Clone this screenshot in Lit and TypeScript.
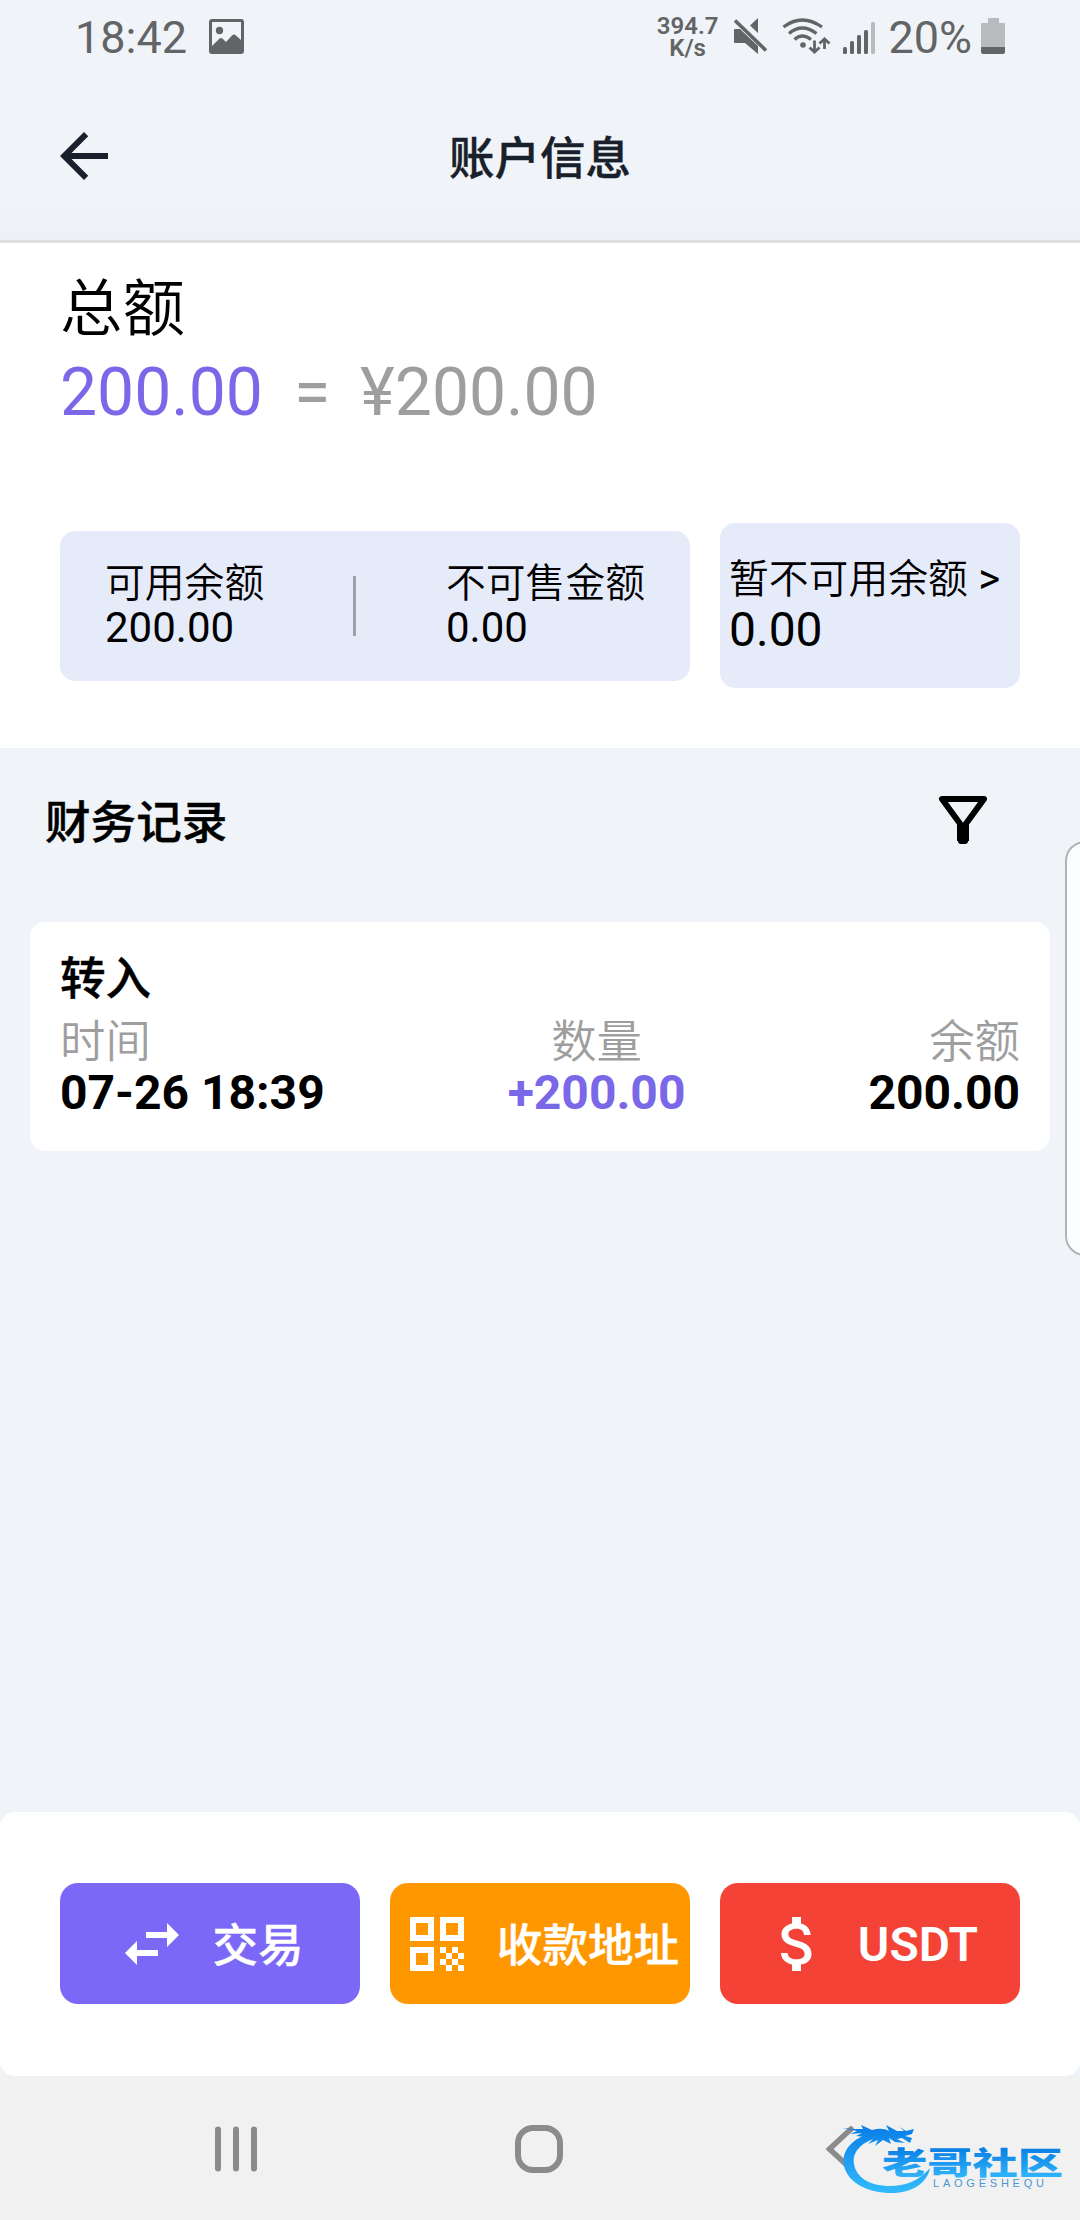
import { LitElement, html, css, svg } from "lit";
import { customElement, property } from "lit/decorators.js";

const fontStack = css`Roboto, "Noto Sans CJK SC", sans-serif`;

@customElement("status-bar")
class StatusBar extends LitElement {
  static styles = css`
    :host { display: block; height: 72px; color: #636466; font-family: ${fontStack}; }
    .bar { display: flex; height: 72px; align-items: flex-start; padding: 0 75px 0 75px; }
    .big { font-size: 45px; line-height: 54px; margin-top: 11px; }
    .pic { width: 35px; height: 35px; margin: 19px 0 0 22px; }
    .grow { flex: 1; }
    .rate { font-size: 24px; line-height: 22px; font-weight: 600; text-align: center; margin-top: 15px; }
    svg { display: block; fill: currentColor; }
    .mute { width: 35px; height: 36px; margin: 18px 0 0 15px; }
    .wifi { width: 49px; height: 36px; margin: 18px 0 0 14px; }
    .signal { width: 32px; height: 32px; margin: 22px 0 0 12px; }
    .pct { margin-left: 13px; }
    .battery { width: 24px; height: 36px; margin: 18px 0 0 9px; }
  `;
  render() {
    return html`<div class="bar">
      <div class="big">18:42</div>
      <svg class="pic" viewBox="0 0 35 35"><path fill-rule="evenodd" d="M3 0H32Q35 0 35 3V32Q35 35 32 35H3Q0 35 0 32V3Q0 0 3 0ZM3 3V27L10 20Q12 18 14 20L17 23L23 16.500Q25 14.500 27 16.500L32 21V3ZM10.500 7.800a3.700 3.700 0 1 1 0 7.400a3.700 3.700 0 1 1 0-7.400Z"/></svg>
      <div class="grow"></div>
      <div class="rate">394.7<br />K/s</div>
      <svg class="mute" viewBox="0 0 35 36"><path d="M2 11H7L25 28V36L12 25H2Q1 25 1 24V12Q1 11 2 11ZM25 0V15L17 7.500Z"/><path d="M2 2.500L33 32.500" stroke="currentColor" stroke-width="3.600" fill="none"/></svg>
      <svg class="wifi" viewBox="0 0 49 36">
        <g fill="none" stroke="currentColor" stroke-width="3.200"><path d="M1.500 9Q20-5 40 9"/><path d="M7 15.500Q20 4.500 34.500 15.500"/><path d="M12.500 21.500Q20 14.500 29 21.500"/>
        <path d="M32.500 22.500V34M27.500 29.500L32.500 34L37.500 29.500M42.500 31V21M37.500 25.500L42.500 21L47.500 25.500" stroke-width="2.800"/></g>
        <circle cx="21" cy="27" r="2.800"/>
      </svg>
      <svg class="signal" viewBox="0 0 32 32"><rect x="0" y="25" width="4" height="7" rx="1.500"/><rect x="7" y="19" width="4" height="13" rx="1.500"/><rect x="14" y="13" width="4" height="19" rx="1.500"/><rect x="21" y="8" width="4" height="24" rx="1.500"/><rect x="28" y="0" width="4" height="32" rx="1.500" fill="#b9babd"/></svg>
      <div class="big pct">20%</div>
      <svg class="battery" viewBox="0 0 24 36"><path d="M7 0H18V5H23Q24 5 24 6V29H0V6Q0 5 1 5H7Z" fill="#b9babd"/><path d="M0 29H24V34Q24 36 22 36H2Q0 36 0 34Z"/></svg>
    </div>`;
  }
}

@customElement("page-header")
class PageHeader extends LitElement {
  @property() heading = "";
  static styles = css`
    :host { display: block; font-family: ${fontStack}; color: #18202b; }
    .header { box-sizing: border-box; height: 171px; border-bottom: 3px solid #dfdfe0; display: grid; grid-template-columns: 72px 1fr 72px; align-items: center; padding: 0 48px; background: linear-gradient(#f0f4f9 80%, #edf0f6); }
    svg { width: 72px; height: 72px; fill: currentColor; display: block; }
    .title { text-align: center; font-size: 45.500px; line-height: 60px; padding-top: 7px; font-weight: 500; -webkit-text-stroke: 0.400px currentColor; }
  `;
  render() {
    return html`<div class="header">
      <svg viewBox="0 0 24 24"><path d="M20 11H7.830l5.590-5.590L12 4l-8 8 8 8 1.410-1.410L7.830 13H20v-2z"/></svg>
      <div class="title">${this.heading}</div>
    </div>`;
  }
}

@customElement("balance-summary")
class BalanceSummary extends LitElement {
  static styles = css`
    :host { display: block; font-family: ${fontStack}; color: #000; background: #fff; }
    .summary { padding: 30px 60px 60px; }
    .label { font-size: 62.500px; line-height: 74px; font-weight: 350; }
    .amount { display: flex; font-size: 66px; line-height: 78px; margin-top: 7px; color: #9e9e9e; }
    .coin { color: #7b68e8; }
    .eq { margin: 0 30px 0 31px; }
    .boxes { display: flex; align-items: center; gap: 30px; margin-top: 91px; }
    .box { box-sizing: border-box; background: #e6ebfa; border-radius: 15px; }
    .wide { width: 630px; height: 150px; padding-left: 45px; display: flex; align-items: center; }
    .first { width: 248px; }
    .rule { width: 3px; height: 60px; background: #9da0a8; margin-right: 90px; }
    .name { font-size: 39.800px; line-height: 44px; font-weight: 350; }
    .num { font-size: 42px; line-height: 44px; }
    .narrow { width: 300px; height: 165px; padding: 33px 0 0 9px; }
    .narrow .name { line-height: 46px; white-space: pre; }
    .narrow .num { font-size: 48px; line-height: 54px; }
    .chev { font-size: 42px; font-weight: 400; }
  `;
  render() {
    return html`<section class="summary">
      <div class="label">总额</div>
      <div class="amount"><span class="coin">200.00</span><span class="eq">=</span><span>¥200.00</span></div>
      <div class="boxes">
        <div class="box wide">
          <div class="first"><div class="name">可用余额</div><div class="num">200.00</div></div>
          <div class="rule"></div>
          <div><div class="name">不可售金额</div><div class="num">0.00</div></div>
        </div>
        <div class="box narrow"><div class="name">暂不可用余额<span class="chev"> &gt;</span></div><div class="num">0.00</div></div>
      </div>
    </section>`;
  }
}

@customElement("record-list")
class RecordList extends LitElement {
  static styles = css`
    :host { display: block; font-family: ${fontStack}; color: #000; }
    .head { box-sizing: border-box; height: 174px; padding: 36px 81px 0 45px; display: flex; justify-content: space-between; align-items: flex-start; }
    .title { font-size: 45.600px; line-height: 72px; font-weight: 500; margin-top: 4px; -webkit-text-stroke: 0.400px currentColor; }
    svg { width: 72px; height: 72px; display: block; }
    .card { box-sizing: border-box; margin: 0 30px; height: 229px; padding: 31px 30px 0; background: #fff; border-radius: 15px; }
    .kind { font-size: 45.600px; line-height: 54px; font-weight: 500; -webkit-text-stroke: 0.400px currentColor; }
    .cols { display: flex; justify-content: space-between; margin-top: 14px; }
    .col:nth-child(2) { text-align: center; }
    .col:nth-child(3) { text-align: right; }
    .key { font-size: 45.400px; line-height: 44px; color: #9e9e9e; font-weight: 350; }
    .val { font-size: 48px; line-height: 56px; font-weight: 700; }
    .plus { color: #7b68e8; }
  `;
  render() {
    return html`
      <div class="head">
        <div class="title">财务记录</div>
        <svg viewBox="0 0 72 72"><path d="M15 15H57L38 41V57H34V41Z" fill="none" stroke="#000" stroke-width="6" stroke-linejoin="round"/><path d="M30 40H42V57H30Z"/></svg>
      </div>
      <article class="card">
        <div class="kind">转入</div>
        <div class="cols">
          <div class="col"><div class="key">时间</div><div class="val">07-26 18:39</div></div>
          <div class="col"><div class="key">数量</div><div class="val plus">+200.00</div></div>
          <div class="col"><div class="key">余额</div><div class="val">200.00</div></div>
        </div>
      </article>`;
  }
}

const actions = [
  { tone: "violet", label: "交易", icon: svg`<path d="M6.990 11L3 15l3.990 4v-3H14v-2H6.990v-3zM21 9l-3.990-4v3H10v2h7.010v3L21 9z"/>` },
  { tone: "orange", label: "收款地址", icon: svg`<path fill-rule="evenodd" d="M3 3h8v8H3zM5 5v4h4V5zM13 3h8v8h-8zM15 5v4h4V5zM3 13h8v8H3zM5 15v4h4v-4z"/><path d="M13 13h2v2h-2zM17 13h2v2h-2zM15 15h2v2h-2zM19 15h2v2h-2zM13 17h2v2h-2zM17 17h2v2h-2zM15 19h2v2h-2zM19 19h2v2h-2z"/>` },
  { tone: "red", label: "USDT", icon: svg`<path d="M11.800 10.900c-2.270-.590-3-1.200-3-2.150 0-1.090 1.010-1.850 2.700-1.850 1.780 0 2.440.850 2.500 2.100h2.210c-.070-1.720-1.120-3.300-3.210-3.810V3h-3v2.160c-1.940.420-3.500 1.680-3.500 3.610 0 2.310 1.910 3.460 4.700 4.130 2.500.600 3 1.480 3 2.410 0 .690-.490 1.790-2.700 1.790-2.060 0-2.870-.920-2.980-2.100h-2.200c.120 2.190 1.760 3.420 3.680 3.830V21h3v-2.150c1.950-.370 3.500-1.500 3.500-3.550 0-2.840-2.430-3.810-4.700-4.400z"/>` },
];

@customElement("action-panel")
class ActionPanel extends LitElement {
  static styles = css`
    :host { display: block; font-family: ${fontStack}; }
    .panel { box-sizing: border-box; height: 264px; padding: 71px 60px 0; background: #fff; border-radius: 15px; display: grid; grid-template-columns: repeat(3, 300px); gap: 30px; }
    .btn { height: 121px; border-radius: 18px; color: #fff; display: flex; align-items: center; justify-content: center; gap: 24px; white-space: nowrap; }
    .violet { background: #7b68f6; }
    .orange { background: #ff9800; }
    .red { background: #f44336; }
    svg { width: 72px; height: 72px; fill: currentColor; flex: none; }
    .text { font-size: 45.600px; line-height: 60px; padding-top: 7px; font-weight: 500; -webkit-text-stroke: 0.400px currentColor; }
    .red .text { font-size: 48px; font-weight: 600; padding-top: 2px; -webkit-text-stroke: 0; }
  `;
  render() {
    return html`<div class="panel">${actions.map(
      (a) => html`<div class="btn ${a.tone}"><svg viewBox="0 0 24 24">${a.icon}</svg><span class="text">${a.label}</span></div>`
    )}</div>`;
  }
}

@customElement("system-nav")
class SystemNav extends LitElement {
  static styles = css`
    :host { display: block; position: relative; }
    .nav { box-sizing: border-box; height: 144px; background: #f1f1f1; display: flex; align-items: center; justify-content: space-between; padding: 2px 214px 0 212px; }
    svg { display: block; }
    .mark { position: absolute; left: 836px; top: 40px; }
    .han { font-family: "Noto Sans CJK SC", sans-serif; font-weight: 900; font-size: 31px; }
    .latin { font-family: "Liberation Sans", sans-serif; font-size: 11px; }
  `;
  render() {
    return html`<div class="nav">
        <svg width="48" height="48" viewBox="0 0 48 48"><path d="M6 4.500V43.500M24 4.500V43.500M42 4.500V43.500" stroke="#8b8b8b" stroke-width="6" stroke-linecap="round"/></svg>
        <svg width="48" height="48" viewBox="0 0 48 48"><rect x="3" y="3" width="42" height="42" rx="15" fill="none" stroke="#8b8b8b" stroke-width="6"/></svg>
        <svg width="48" height="48" viewBox="0 0 48 48"><path d="M33 4L11.500 24L33 44" fill="none" stroke="#8b8b8b" stroke-width="5.500" stroke-linecap="round"/></svg>
      </div>
      <svg class="mark" width="236" height="80" viewBox="836 2116 236 80">
        <defs><linearGradient id="sea" gradientUnits="userSpaceOnUse" x1="0" y1="2130" x2="0" y2="2190"><stop offset="0" stop-color="#0c82e8"/><stop offset="1" stop-color="#30b8fc"/></linearGradient>
        <linearGradient id="ink" gradientUnits="userSpaceOnUse" x1="0" y1="2148" x2="0" y2="2177"><stop offset="0" stop-color="#087fe4"/><stop offset="1" stop-color="#30b4fa"/></linearGradient></defs>
        <path d="M853 2140Q858 2144 855 2165Q862 2186 888 2187Q906 2186 924 2172L928 2167Q934 2160 929 2165L915 2166L885 2148Z" fill="#f1f1f1"/>
        <path fill="url(#sea)" d="M872 2133C852 2138 841 2151 844 2166C848 2183 868 2193 892 2193C912 2193 927 2183 930 2168C919 2181 905 2186 890 2186C869 2186 856 2177 854 2164C852 2152 861 2143 876 2138Z"/>
        <path fill="url(#sea)" d="M842 2128L852 2129L863 2129L861 2125L872 2130Q883 2127 889 2131L886 2125L897 2131L904 2131L900 2127L906 2131L914 2129L912 2134L905 2136L912 2138L910 2143L902 2138L897 2139L905 2143L895 2142L889 2138L891 2144L883 2140L875 2146L878 2140L868 2144L873 2139L861 2143L866 2137L856 2136L862 2133L850 2134L857 2131Z"/>
        <text class="han" x="882" y="2174" textLength="181" lengthAdjust="spacingAndGlyphs" fill="url(#ink)">老哥社区</text>
        <text class="latin" x="933" y="2186.500" textLength="111" fill="#4a96d2">LAOGESHEQU</text>
      </svg>`;
  }
}

@customElement("app-root")
class AppRoot extends LitElement {
  static styles = css`
    :host { display: block; position: relative; width: 1080px; height: 2220px; overflow: hidden; background: #f0f4f9; }
    .page { display: flex; flex-direction: column; height: 2220px; }
    .rest { flex: 1; }
    .handle { position: absolute; box-sizing: border-box; left: 1065px; top: 841px; width: 40px; height: 415px; border: 2px solid #b1b3b7; border-radius: 20px; background: #fcfdff; }
  `;
  render() {
    return html`<div class="page">
        <status-bar></status-bar>
        <page-header heading="账户信息"></page-header>
        <balance-summary></balance-summary>
        <record-list></record-list>
        <div class="rest"></div>
        <action-panel></action-panel>
        <system-nav></system-nav>
      </div>
      <div class="handle"></div>`;
  }
}
